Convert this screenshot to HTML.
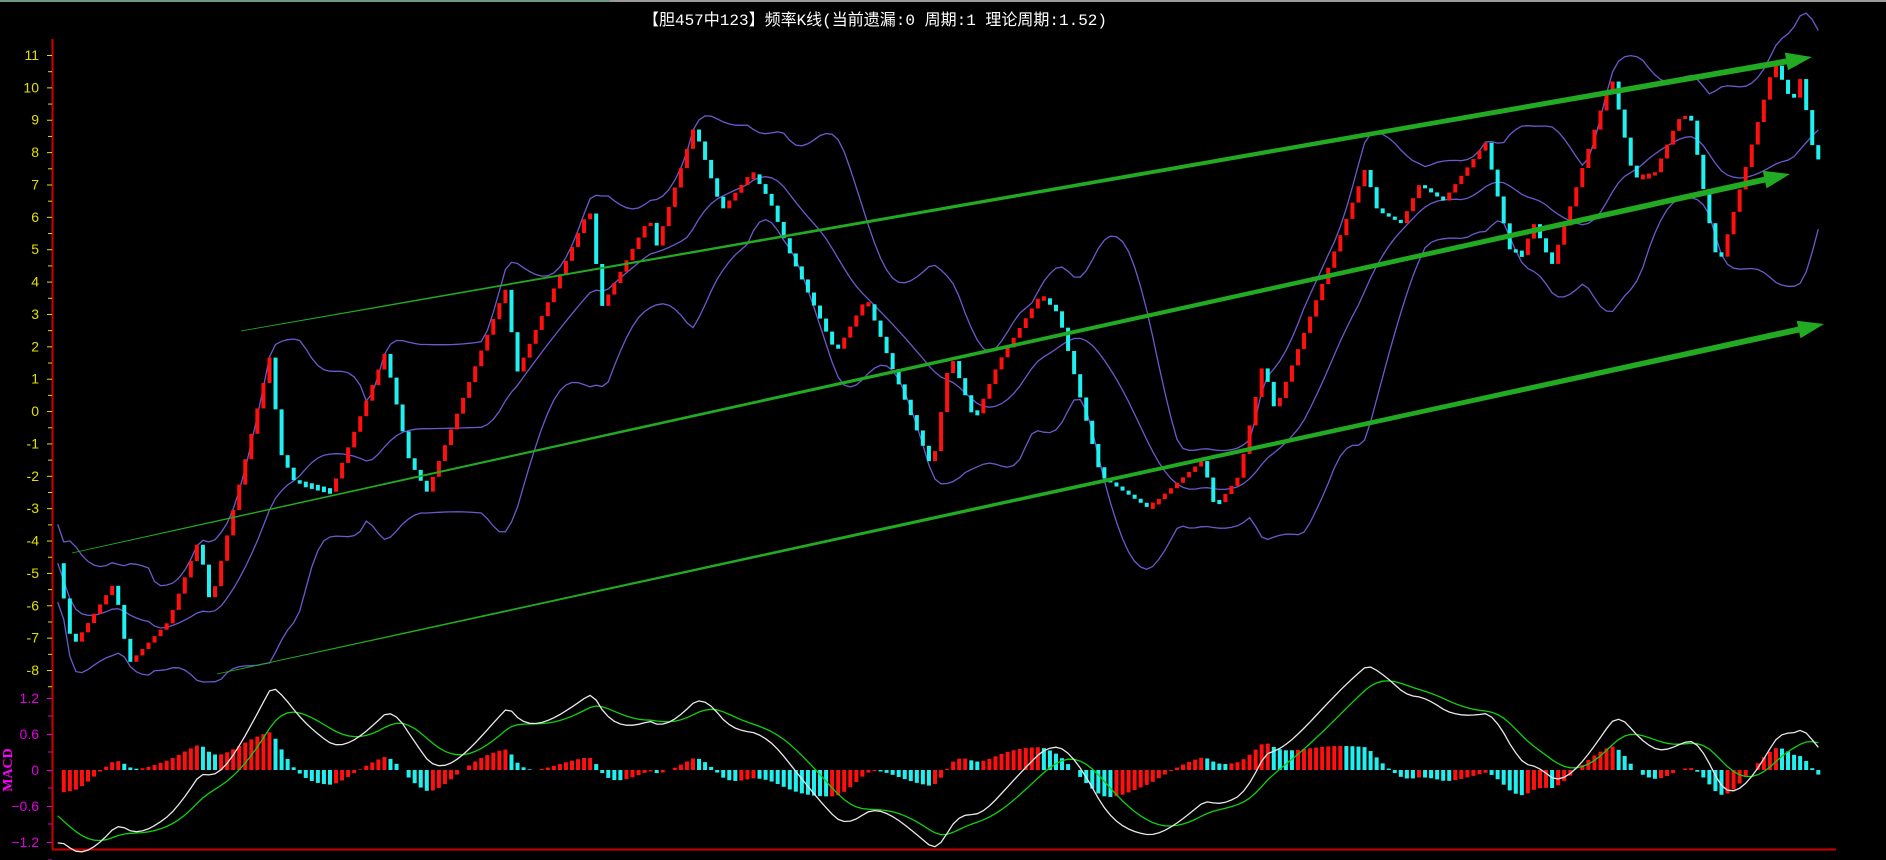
<!DOCTYPE html>
<html><head><meta charset="utf-8"><style>
html,body{margin:0;padding:0;background:#000;width:1886px;height:860px;overflow:hidden}
svg{display:block}
text{font-family:"Liberation Sans","Noto Sans CJK SC",sans-serif}
</style></head><body>
<svg id="s" width="1886" height="860" xmlns="http://www.w3.org/2000/svg">
<rect x="0" y="0" width="1886" height="860" fill="#000"/>
<rect x="0" y="0" width="610" height="2" fill="#6f9a80"/>
<rect x="610" y="0" width="1276" height="2" fill="#9a9a9a"/>
<text x="875" y="25" fill="#fff" font-size="16" text-anchor="middle" style="font-family:'Liberation Mono','Noto Sans CJK SC',monospace">【胆457中123】频率K线(当前遗漏:0 周期:1 理论周期:1.52)</text>
<line x1="52.5" y1="39" x2="52.5" y2="849" stroke="#d00000" stroke-width="2"/>
<line x1="52" y1="849.5" x2="1836" y2="849.5" stroke="#d00000" stroke-width="2"/>
<g id="ax"></g>
<g id="bb"></g>
<g id="cd"></g>
<g id="ar"></g>
<g id="md"></g>
<text transform="translate(12,770) rotate(-90)" fill="#ff00ff" font-size="14" font-weight="bold" text-anchor="middle" style="font-family:'Liberation Serif',serif">MACD</text>
</svg>
<script>
var NS="http://www.w3.org/2000/svg";
function el(p,t,a,txt){var e=document.createElementNS(NS,t);for(var k in a)e.setAttribute(k,a[k]);if(txt!=null)e.textContent=txt;document.getElementById(p).appendChild(e);return e;}
function py(v){return 55+(11-v)*32.37;}
for(var v=11;v>=-8;v--){var y=py(v);el("ax","text",{x:39,y:y+5,fill:"#e0e000","font-size":14,"text-anchor":"end"},String(v));
el("ax","line",{x1:47,y1:y+0.5,x2:52,y2:y+0.5,stroke:"#e0e000"});
el("ax","line",{x1:48,y1:y+16.7,x2:52,y2:y+16.7,stroke:"#e0e000"});}
function my(v){return 770-v*60;}
[1.2,0.6,0,-0.6,-1.2].forEach(function(v){var y=my(v);el("ax","text",{x:39,y:y+5,fill:"#e000e0","font-size":14,"text-anchor":"end"},(v===0?"0":v.toFixed(1).replace("-","−")));
el("ax","line",{x1:47,y1:y+0.5,x2:52,y2:y+0.5,stroke:"#e000e0"});el("ax","line",{x1:48,y1:y+18,x2:52,y2:y+18,stroke:"#e000e0"});});
var K=[[48,-4.7],[60,-7.3],[95,-5.3],[107,-7.8],[140,-6.5],[165,-4],[175,-6],[225,1.8],[232,-1.2],[245,-2.2],[275,-2.5],[320,1.8],[340,-1.5],[355,-2.5],[420,3.8],[430,1.2],[490,6.3],[500,3.2],[540,6],[545,5],[577,8.8],[600,6.2],[625,7.4],[640,6.5],[655,5],[695,1.8],[720,3.5],[740,1.5],[775,-1.8],[790,1.8],[810,-0.3],[830,1.5],[865,3.6],[880,3],[915,-2],[955,-3.0],[1000,-1.5],[1010,-3],[1030,-2],[1050,1.5],[1060,0],[1135,7.5],[1145,6.2],[1165,5.8],[1180,7],[1200,6.5],[1235,8.3],[1255,5],[1265,4.8],[1275,5.8],[1290,4.5],[1335,9.8],[1340,10.3],[1358,7.2],[1375,7.3],[1395,9],[1405,9.2],[1425,5],[1430,4.6],[1475,10.8],[1490,9.5],[1497,10.3],[1510,7.5],[1515,8.3]];
var S=1.2028;K=K.map(function(p){return [p[0]*S,p[1]];});
function interp(x){for(var i=0;i<K.length-1;i++){if(x<=K[i+1][0]){var t=(x-K[i][0])/(K[i+1][0]-K[i][0]);return K[i][1]+t*(K[i+1][1]-K[i][1]);}}return K[K.length-1][1];}
var xs=[],vals=[];for(var x=K[0][0];x<=K[K.length-1][0]+0.1;x+=6.05){xs.push(x);vals.push(interp(x));}
for(var i=1;i<vals.length;i++){var a=vals[i-1],b=vals[i];var up=b>=a;var y1=py(Math.max(a,b)),y2=py(Math.min(a,b));if(y2-y1<3){y1-=2;y2+=2;}
el("cd","rect",{x:xs[i]-2,y:y1,width:4,height:y2-y1,fill:up?"#ff1010":"#20f0f0"});}
var N=16,mid=[],upb=[],lob=[];
for(var i=0;i<vals.length;i++){var s=0,c=0;for(var j=Math.max(0,i-N+1);j<=i;j++){s+=vals[j];c++;}var m=s/c;var q=0;for(var j=Math.max(0,i-N+1);j<=i;j++)q+=(vals[j]-m)*(vals[j]-m);var sd=Math.sqrt(q/c);sd=Math.max(sd,0.6);mid.push(m);upb.push(m+2*sd);lob.push(m-2*sd);}
function pl(arr,f){return arr.map(function(v,i){return xs[i].toFixed(1)+","+f(v).toFixed(1);}).join(" ");}
[mid,upb,lob].forEach(function(a){el("bb","polyline",{points:pl(a,py),fill:"none",stroke:"#6a5acd","stroke-width":1.3});});
function arrow(x1,y1,x2,y2,w1,w2){var dx=x2-x1,dy=y2-y1,L=Math.hypot(dx,dy),ux=dx/L,uy=dy/L,nx=-uy,ny=ux;var hl=26,hw=9;var bx=x2-ux*hl,by=y2-uy*hl;
var pts=[[x1+nx*w1/2,y1+ny*w1/2],[bx+nx*w2/2,by+ny*w2/2],[bx+nx*hw,by+ny*hw],[x2,y2],[bx-nx*hw,by-ny*hw],[bx-nx*w2/2,by-ny*w2/2],[x1-nx*w1/2,y1-ny*w1/2]];
el("ar","polygon",{points:pts.map(function(p){return p[0].toFixed(1)+","+p[1].toFixed(1);}).join(" "),fill:"#22aa22"});}
arrow(241,331,1812,57,0.8,6);arrow(72,553,1790,174,0.8,6);arrow(217,674,1824,324,0.8,6);
function ema(a,n,init){var k=2/(n+1),o=[],e=(init==null?a[0]:init);a.forEach(function(v){e=e+k*(v-e);o.push(e);});return o;}
var e12=ema(vals,12,vals[0]+0.5),e26=ema(vals,26,vals[0]+2.0),dif=e12.map(function(v,i){return (v-e26[i])*0.85;}),dea=ema(dif,9,-0.65);
for(var i=1;i<vals.length;i++){var h=(dif[i]-dea[i])*1.0;if(Math.abs(h)<0.01)continue;var y0=my(0),y1=my(h);
var col=(h>0)?(dif[i]-dea[i]>dif[i-1]-dea[i-1]?"#ff1010":"#20f0f0"):(dif[i]-dea[i]<dif[i-1]-dea[i-1]?"#20f0f0":"#ff1010");
el("md","rect",{x:xs[i]-2,y:Math.min(y0,y1),width:4,height:Math.abs(y1-y0),fill:col});}
el("md","polyline",{points:pl(dea,my),fill:"none",stroke:"#10d010","stroke-width":1.3});
el("md","polyline",{points:pl(dif,my),fill:"none",stroke:"#e8e8e8","stroke-width":1.3});
</script>
</body></html>
